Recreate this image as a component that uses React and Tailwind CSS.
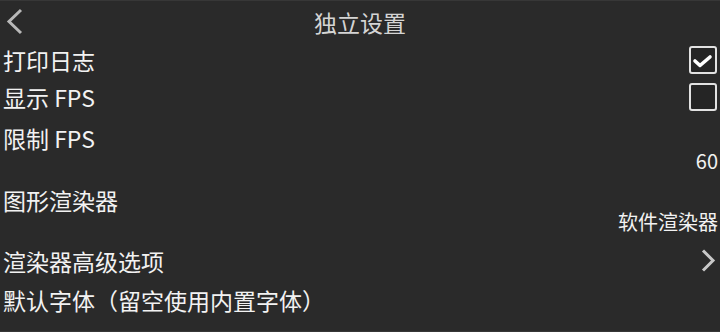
import React from "react";

const font = { fontFamily: '"Noto Sans CJK SC", "Noto Sans", sans-serif' };

function Checkbox({ checked }) {
  return (
    <div className="w-[28px] h-[28px] rounded-[3px] border-2 border-[#e2e2e2] bg-[#252525] flex items-center justify-center">
      {checked && (
        <svg width="24" height="24" viewBox="0 0 24 24" className="block">
          <polyline points="4,13 9,17.5 19,9" fill="none" stroke="#ffffff" strokeWidth="3.6" strokeLinecap="round" strokeLinejoin="round" />
        </svg>
      )}
    </div>
  );
}

export default function App() {
  return (
    <div className="w-[720px] h-[332px] bg-[#2a2a2a] text-[#f2f2f2] overflow-hidden flex flex-col border-t border-b border-[#373737]" style={font}>
      <div className="relative h-[43px] flex items-center justify-center shrink-0">
        <svg width="20" height="30" viewBox="0 0 20 30" className="absolute left-[4px] top-[6px]">
          <polyline points="17,3 5,14.5 17,26" fill="none" stroke="#b8b8b8" strokeWidth="3" />
        </svg>
        <span className="text-[23px] leading-[23px] text-[#d4d4d4]">独立设置</span>
      </div>
      <div className="h-[32px] flex items-center justify-between pl-[3px] pr-[3px] shrink-0">
        <span className="text-[23px] leading-[23px]">打印日志</span>
        <Checkbox checked />
      </div>
      <div className="h-[42px] flex items-center justify-between pl-[3px] pr-[3px] shrink-0">
        <span className="text-[23px] leading-[23px]">显示 FPS</span>
        <Checkbox />
      </div>
      <div className="pt-[7px] pl-[3px] pr-[2px] flex flex-col shrink-0">
        <div className="h-[26px] flex items-center text-[23px] leading-[23px]">限制 FPS</div>
        <div className="h-[20px] flex items-center justify-end text-[20px] leading-[20px]">60</div>
      </div>
      <div className="mt-[17px] pl-[3px] pr-[2px] flex flex-col shrink-0">
        <div className="h-[24px] flex items-center text-[23px] leading-[23px]">图形渲染器</div>
        <div className="h-[20px] flex items-center justify-end text-[20px] leading-[20px]">软件渲染器</div>
      </div>
      <div className="mt-[12px] h-[34px] flex items-center justify-between pl-[3px] pr-[4px] shrink-0">
        <span className="text-[23px] leading-[23px]">渲染器高级选项</span>
        <svg width="16" height="26" viewBox="0 0 16 26" className="block">
          <polyline points="3,2.5 13,12.5 3,22.5" fill="none" stroke="#c8c8c8" strokeWidth="3" />
        </svg>
      </div>
      <div className="h-[44px] flex items-center pl-[3px] shrink-0">
        <span className="text-[23px] leading-[23px]">默认字体（留空使用内置字体）</span>
      </div>
    </div>
  );
}
